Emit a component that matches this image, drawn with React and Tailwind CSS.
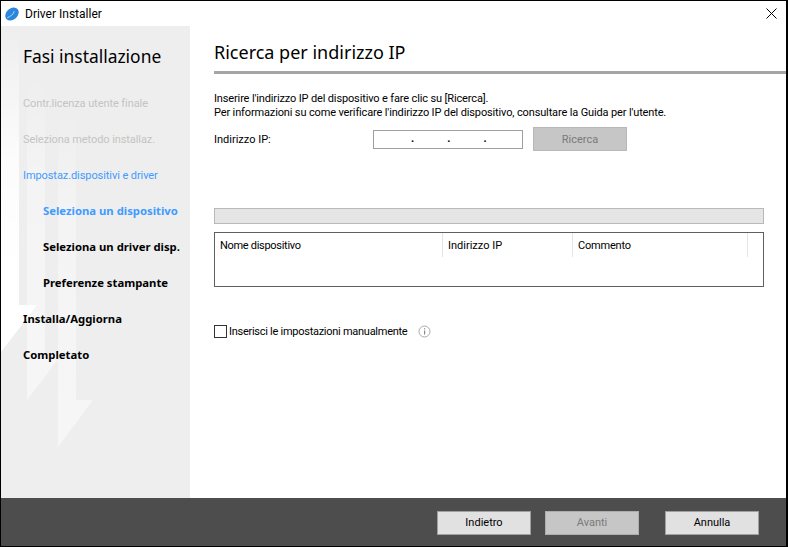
import React from 'react';

const body = "font-['Roboto','Open_Sans',sans-serif]";
const heading = "font-['Noto_Sans','Open_Sans',sans-serif]";

function SidebarArrows() {
  return (
    <svg className="absolute left-0 top-0" width="189" height="472" viewBox="0 0 189 472">
      <defs>
        <linearGradient id="fade" x1="0" y1="0" x2="0" y2="1">
          <stop offset="0" stopColor="#ffffff" stopOpacity="0" />
          <stop offset="0.3" stopColor="#ffffff" stopOpacity="0.35" />
          <stop offset="1" stopColor="#ffffff" stopOpacity="0.5" />
        </linearGradient>
        <linearGradient id="fadeLeft" x1="0" y1="0" x2="0" y2="1">
          <stop offset="0" stopColor="#ffffff" stopOpacity="0" />
          <stop offset="0.4" stopColor="#ffffff" stopOpacity="0.8" />
          <stop offset="0.75" stopColor="#ffffff" stopOpacity="1" />
        </linearGradient>
      </defs>
      <path d="M0 0H18V279H36L0 326Z" fill="url(#fadeLeft)" />
      <path d="M26 49H44V327H62L26 374Z" fill="url(#fade)" />
      <path d="M57 85H75V374H92L57 421Z" fill="url(#fade)" />
    </svg>
  );
}

function Step({ children, color = 'text-black', indent = false, bold = false }) {
  return (
    <div
      className={`h-9 flex items-center ${color} ${indent ? 'pl-[42px]' : 'pl-[22px]'} ${
        bold ? `font-bold text-[11.3px] ${heading}` : 'pt-[2px] text-[11px] tracking-[-0.08px]'
      }`}
    >
      {children}
    </div>
  );
}

function FooterButton({ children, disabled = false }) {
  return (
    <button
      className={`w-[94px] h-6 border text-[11px] flex items-center justify-center ${
        disabled ? 'bg-[#c6c6c6] border-[#adadad] text-[#7a7a7a]' : 'bg-[#e1e1e1] border-[#a0a0a0] text-black'
      }`}
    >
      {children}
    </button>
  );
}

export default function App() {
  return (
    <div className={`w-[788px] h-[547px] bg-white border border-black border-r-2 flex flex-col overflow-hidden ${body}`}>
      {/* Title bar */}
      <div className="h-[25px] shrink-0 flex items-center justify-between pl-[4px] pr-[9px]">
        <div className="flex items-center gap-[6px]">
          <svg width="14" height="14" viewBox="0 0 15 15">
            <ellipse cx="7.5" cy="7.5" rx="8" ry="6" transform="rotate(-42 7.5 7.5)" fill="#2b86dc" />
            <path d="M2.5 11.5C6 10 8.5 8.5 10 4.5" stroke="#bfdcf7" strokeWidth="1" fill="none" />
          </svg>
          <span className="text-[12px] text-black">Driver Installer</span>
        </div>
        <svg width="11" height="11" viewBox="0 0 11 11">
          <path d="M0.5 0.5L10.5 10.5M10.5 0.5L0.5 10.5" stroke="#000000" strokeWidth="1" />
        </svg>
      </div>

      <div className="flex-1 flex min-h-0">
        {/* Sidebar */}
        <aside className="w-[189px] shrink-0 bg-[#eeeeee] relative overflow-hidden">
          <SidebarArrows />
          <div className="relative">
            <h1 className={`text-[17.4px] leading-[24px] text-black pl-[22px] pt-[18px] pb-[17px] ${heading}`}>Fasi installazione</h1>
            <Step color="text-[#c4c4c4]">Contr.licenza utente finale</Step>
            <Step color="text-[#c4c4c4]">Seleziona metodo installaz.</Step>
            <Step color="text-[#3f9bff]">Impostaz.dispositivi e driver</Step>
            <Step color="text-[#3f9bff]" indent bold>Seleziona un dispositivo</Step>
            <Step indent bold>Seleziona un driver disp.</Step>
            <Step indent bold>Preferenze stampante</Step>
            <Step bold>Installa/Aggiorna</Step>
            <Step bold>Completato</Step>
          </div>
        </aside>

        {/* Main */}
        <main className="flex-1 pl-6 pr-0 min-w-0">
          <h2 className={`text-[18px] leading-[24px] text-black pt-[14px] pb-[7px] ${heading}`}>Ricerca per indirizzo IP</h2>
          <div className="h-[3px] bg-[#a5a5a5]" />
          <div className="pr-[22px]">
            <p className="text-[11px] tracking-[-0.14px] leading-[14px] text-black mt-[18px]">
              Inserire l'indirizzo IP del dispositivo e fare clic su [Ricerca].
              <br />
              Per informazioni su come verificare l'indirizzo IP del dispositivo, consultare la Guida per l'utente.
            </p>
            <div className="flex items-center mt-[7px]">
              <span className="w-[159px] pt-[2px] text-[11px] text-black">Indirizzo IP:</span>
              <div className="w-[150px] h-[19px] border border-[#9f9f9f] flex text-[11px] font-bold leading-[16px] text-black pl-[37px] gap-[33px]">
                <span>.</span>
                <span>.</span>
                <span>.</span>
              </div>
              <div className="ml-[10px] w-[94px] h-6 pt-[2px] bg-[#c6c6c6] border border-[#b8b8b8] text-[11px] text-[#7a7a7a] flex items-center justify-center">
                Ricerca
              </div>
            </div>

            <div className="mt-[57px] h-4 bg-[#e5e5e5] border border-[#b9b9b9]" />

            <div className="mt-2 h-[55px] border border-[#5f5f5f]">
              <div className="h-6 flex text-[11px] text-black">
                <div className="w-[228px] pl-[5px] pt-[2px] flex items-center border-r border-[#e4e4e4] tracking-[-0.3px]">Nome dispositivo</div>
                <div className="w-[130px] pl-[5px] pt-[2px] flex items-center border-r border-[#e4e4e4]">Indirizzo IP</div>
                <div className="w-[175px] pl-[5px] pt-[2px] flex items-center border-r border-[#e4e4e4] tracking-[-0.2px]">Commento</div>
              </div>
            </div>

            <label className="flex items-center mt-[35px] text-[11px] tracking-[-0.27px] text-black">
              <span className="w-[13px] h-[13px] border border-[#333333] bg-white mr-[2px]" />
              <span className="pt-[2px]">Inserisci le impostazioni manualmente</span>
              <svg className="ml-[11px]" width="13" height="13" viewBox="0 0 13 13" fill="none">
                <circle cx="6.5" cy="6.5" r="5.5" stroke="#a8a8a8" />
                <rect x="6" y="5.5" width="1.2" height="4" fill="#8a8a8a" />
                <rect x="6" y="3.2" width="1.2" height="1.2" fill="#8a8a8a" />
              </svg>
            </label>
          </div>
        </main>
      </div>

      {/* Footer */}
      <footer className="h-[48px] shrink-0 bg-[#4d4d4e] flex items-center justify-end pr-[27px] pt-[2px]">
        <FooterButton>Indietro</FooterButton>
        <div className="w-[14px]" />
        <FooterButton disabled>Avanti</FooterButton>
        <div className="w-[26px]" />
        <FooterButton>Annulla</FooterButton>
      </footer>
    </div>
  );
}
